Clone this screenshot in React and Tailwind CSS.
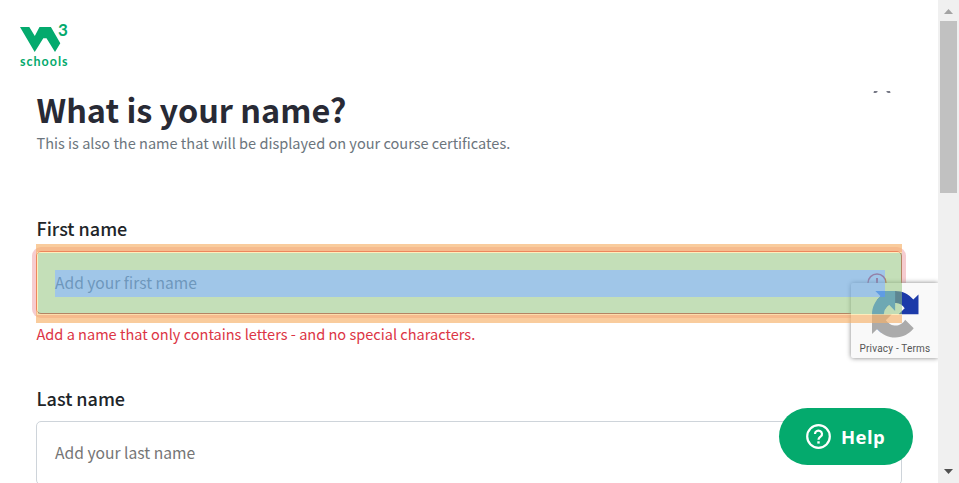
const SOURCE = "font-['Noto_Sans_CJK_SC','Noto_Sans',sans-serif]";

function Logo() {
  return (
    <svg width="56" height="50" viewBox="0 0 56 50" className="block overflow-visible fill-[#04aa6d]">
      <path d="M0 5H9.300L14.800 14L19.500 5H30.900L40.300 21.300L35 30L26.500 16.300L23.300 16.300L14.700 30Z" />
      <text x="38" y="13.500" className="font-[Lato,sans-serif] text-[17px] font-bold">3</text>
      <text x="0" y="43.500" textLength="47.500" className="font-[Lato,sans-serif] text-[12.500px] font-bold">schools</text>
    </svg>
  );
}

function Highlight() {
  return (
    <div className="pointer-events-none absolute left-9 top-[244px] z-20 h-[79px] w-[866px]">
      <div className="h-full border-b-[8px] border-l border-t-[8px] border-[rgba(246,178,107,0.66)]">
        <div className="h-full border-y border-l border-[rgba(255,229,153,0.66)]">
          <div className="h-full border-[17px] border-[rgba(147,196,125,0.55)]">
            <div className="h-full bg-[rgba(111,168,220,0.66)]" />
          </div>
        </div>
      </div>
    </div>
  );
}

function Recaptcha() {
  return (
    <div className="absolute left-[851px] top-[283px] z-10 h-[75px] w-[87px] rounded-l-[2px] bg-[#f9f9f9] shadow-[0_0_5px_gray] [clip-path:inset(-8px_0_-8px_-8px)]">
      <svg width="46.500" height="46.500" viewBox="0 0 64 64" className="absolute left-[21px] top-[8px]">
        <path d="M64 31.955l-.016-1.370V4.687l-7.160 7.160C50.964 4.674 42.033.093 32.050.093c-10.400 0-19.635 4.960-25.458 12.640l11.736 11.860a15.550 15.550 0 0 1 4.754-5.334c2.050-1.600 4.952-2.906 8.968-2.906.485 0 .860.057 1.135.163 4.976.393 9.288 3.140 11.828 7.124l-8.307 8.307L64 31.953" fill="#1c3aa9" />
        <path d="M31.862.094l-1.370.016H4.594l7.160 7.160C4.580 13.147 0 22.080 0 32.046c0 10.400 4.960 19.635 12.640 25.458L24.500 45.768a15.550 15.550 0 0 1-5.334-4.754c-1.600-2.050-2.906-4.952-2.906-8.968 0-.485.057-.860.163-1.135.393-4.976 3.140-9.288 7.124-11.828l8.307 8.307L31.860.095" fill="#4285f4" />
        <path d="M.001 32.045l.016 1.370v25.898l7.160-7.160c5.873 7.173 14.804 11.753 24.773 11.753 10.400 0 19.636-4.960 25.458-12.640L45.673 39.406a15.550 15.550 0 0 1-4.754 5.334c-2.050 1.600-4.952 2.906-8.968 2.906-.485 0-.860-.057-1.135-.163-4.976-.393-9.288-3.140-11.828-7.124l8.307-8.307L0 32.046" fill="#ababab" />
      </svg>
      <div className="flex h-full items-end justify-center pb-[3px] pl-px font-[Roboto,sans-serif] text-[10px] leading-[13px] tracking-[0.200px] text-[#555]">
        Privacy - Terms
      </div>
    </div>
  );
}

function HelpButton() {
  return (
    <button className="absolute left-[779px] top-[408px] z-30 flex h-[57px] w-[134px] items-center rounded-full bg-[#04aa6d] pl-[27px] text-white">
      <svg width="25" height="25" viewBox="0 0 25 25" fill="none" stroke="#fff">
        <circle cx="12.500" cy="12.500" r="11.300" strokeWidth="2.200" />
        <path d="M9 10a3.500 3.300 0 1 1 5.700 2.500c-1.300 1.100-2.200 1.600-2.200 3.200" strokeWidth="2.200" />
        <path d="M12.500 17.300v2.300" strokeWidth="2.400" />
      </svg>
      <span className="ml-[10px] font-['Open_Sans','Noto_Sans',sans-serif] text-[18.500px] font-bold leading-6 tracking-[0.400px]">Help</span>
    </button>
  );
}

function Scrollbar() {
  return (
    <div className="flex h-full w-[21px] shrink-0 flex-col items-center bg-[#f0f0f0]">
      <svg width="21" height="21" viewBox="0 0 21 21"><path d="M6 14h9l-4.500-5z" fill="#a3a3a3" /></svg>
      <div className="h-[172px] w-[17px] bg-[#c1c1c1]" />
      <svg width="21" height="21" viewBox="0 0 21 21" className="mt-auto"><path d="M6 7h9l-4.500 5z" fill="#505050" /></svg>
    </div>
  );
}

export default function App() {
  return (
    <div className={"relative flex h-[483px] w-[959px] overflow-hidden bg-white text-[#212529] " + SOURCE}>
      <main className="h-full w-[938px]">
        <header className="h-[90px] pl-5 pt-[22px]">
          <Logo />
        </header>
        <section className="ml-9 w-[866px]">
          <div className="flex h-[64px] justify-between">
            <div className="pl-[0.500px]">
              <h1 className="h-[41px] whitespace-nowrap text-[32.400px] font-bold leading-[38px] text-[#282a35]">What is your name?</h1>
              <p className="h-6 whitespace-nowrap text-[14.550px] leading-6 text-[#6c757d]">This is also the name that will be displayed on your course certificates.</p>
            </div>
            <svg width="18" height="2" viewBox="0 0 18 2" className="mr-[11px] mt-px" fill="#777986">
              <path d="M1 0H4.500V1L3 2H0.500ZM17 0H13.500V1L15 2H17.500Z" />
            </svg>
          </div>
          <label className="mt-[62px] block h-[35px] pl-[0.500px] text-[18px] font-medium leading-6">First name</label>
          <div className="relative flex h-[63px] items-center rounded-[5px] border border-[#dc3545] pl-[18px] text-[15.600px] text-[#6c757d] shadow-[0_0_0_4px_rgba(220,53,69,0.25)]">
            Add your first name
            <svg width="20" height="20" viewBox="0 0 20 20" className="absolute right-[14px] top-[21px]" fill="none" stroke="#dc3545">
              <circle cx="10" cy="10" r="9" strokeWidth="1.500" />
              <path d="M10 5v5" strokeWidth="2" />
            </svg>
          </div>
          <p className="mt-[8px] h-6 pl-[0.500px] text-[14.550px] leading-6 text-[#dc3545]">Add a name that only contains letters - and no special characters.</p>
          <label className="mt-[40px] block h-[35px] pl-[0.500px] text-[18px] font-medium leading-6">Last name</label>
          <div className="flex h-[64px] items-center rounded-[5px] border border-[#ced4da] pl-[18px] text-[15.650px] text-[#757575]">
            Add your last name
          </div>
        </section>
      </main>
      <Scrollbar />
      <Recaptcha />
      <Highlight />
      <HelpButton />
    </div>
  );
}
